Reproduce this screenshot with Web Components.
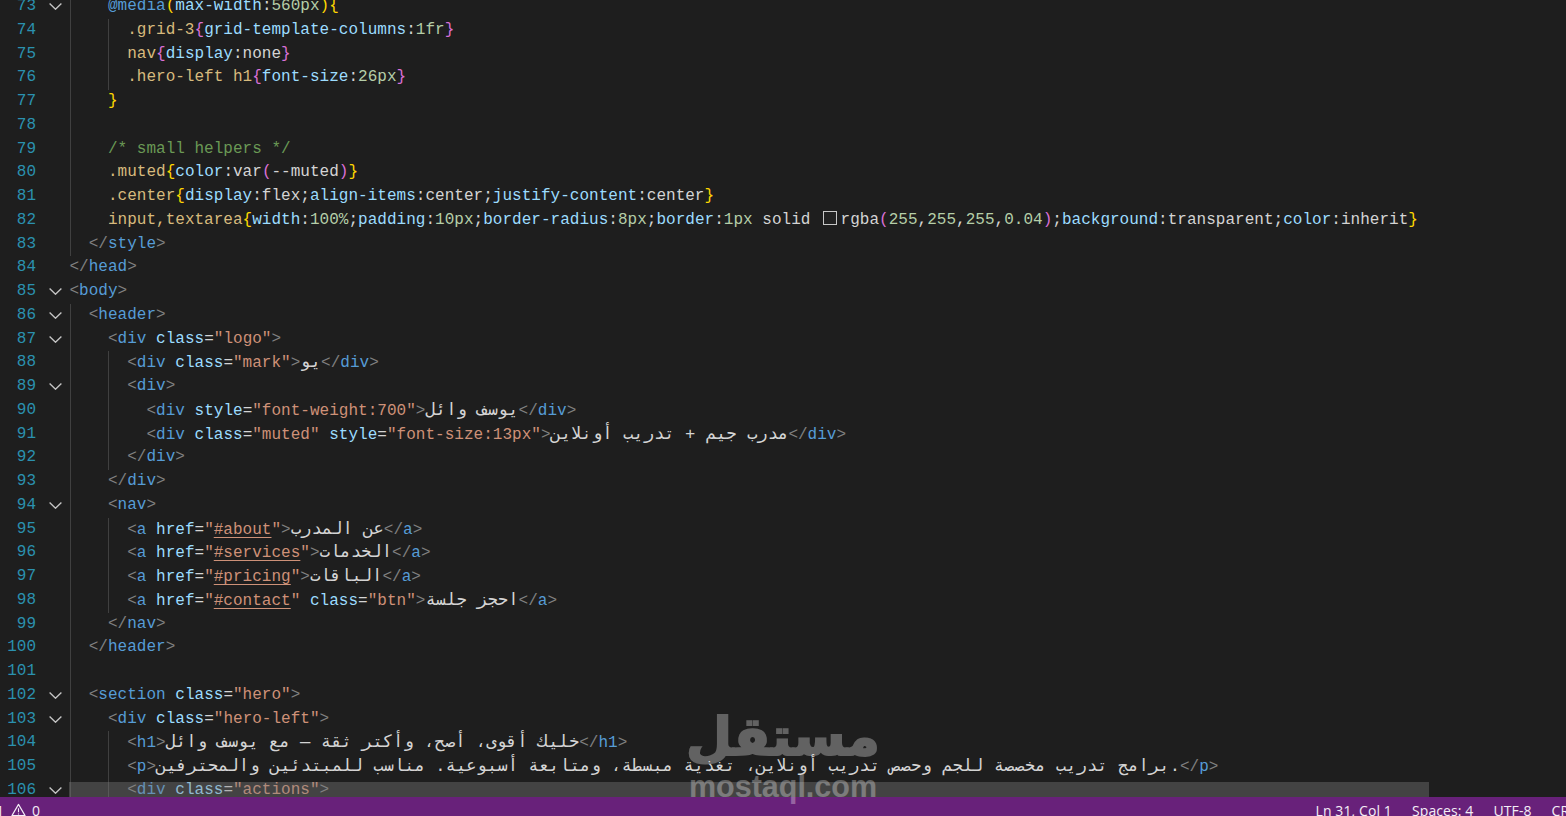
<!DOCTYPE html>
<html lang="en">
<head>
<meta charset="utf-8">
<title>index.html</title>
<style>
html,body{margin:0;height:100%;background:#1e1e1e;overflow:hidden}
</style>
</head>
<body>
<vs-window></vs-window>
<script>
const C={p:'#808080',t:'#569cd6',a:'#9cdcfe',s:'#ce9178',x:'#d4d4d4',e:'#d7ba7d',n:'#b5cea8',c:'#6a9955',g:'#ffd700',m:'#da70d6',b:'#179fff',k:'#569cd6'};

function esc(s){return s.replace(/&/g,'&amp;').replace(/</g,'&lt;').replace(/>/g,'&gt;')}
function span(c,s,extra){return `<span style="color:${C[c]}${extra||''}">${esc(s)}</span>`}

/* HTML line highlighter */
function html(src){
  let out='',re=/(<\/?)([a-z0-9]+)|(\s+[a-z]+)(=)("[^"]*")|(>)|([^<>]+)/g,m;
  while((m=re.exec(src))){
    if(m[1]) out+=span('p',m[1])+span('t',m[2]);
    else if(m[3]){
      out+=span('a',m[3])+span('x',m[4]);
      if(/^"#/.test(m[5])){
        out+=span('s','"')+span('s',m[5].slice(1,-1),';text-decoration:underline;text-underline-offset:3px;text-decoration-thickness:1px')+span('s','"');
      } else out+=span('s',m[5]);
    }
    else if(m[6]) out+=span('p',m[6]);
    else out+=span('x',m[7],';font-size:17.2px;letter-spacing:0');
  }
  return out;
}
/* CSS line: "c|text" tokens split by the broken bar */
function css(src){
  return src.split('¦').map(t=>{
    if(t==='#swatch') return '<i class="swatch"></i>';
    return span(t[0],t.slice(2));
  }).join('');
}

const LINES=[
[73,4,1,[0],css('k|@media¦g|(¦a|max-width¦x|:¦n|560px¦g|)¦g|{')],
[74,6,0,[0,4],css('e|.grid-3¦m|{¦a|grid-template-columns¦x|:¦n|1fr¦m|}')],
[75,6,0,[0,4],css('e|nav¦m|{¦a|display¦x|:none¦m|}')],
[76,6,0,[0,4],css('e|.hero-left h1¦m|{¦a|font-size¦x|:¦n|26px¦m|}')],
[77,4,0,[0],css('g|}')],
[78,0,0,[0],''],
[79,4,0,[0],css('c|/* small helpers */')],
[80,4,0,[0],css('e|.muted¦g|{¦a|color¦x|:var¦m|(¦x|--muted¦m|)¦g|}')],
[81,4,0,[0],css('e|.center¦g|{¦a|display¦x|:flex;¦a|align-items¦x|:center;¦a|justify-content¦x|:center¦g|}')],
[82,4,0,[0],css('e|input,textarea¦g|{¦a|width¦x|:¦n|100%¦x|;¦a|padding¦x|:¦n|10px¦x|;¦a|border-radius¦x|:¦n|8px¦x|;¦a|border¦x|:¦n|1px¦x| solid ¦#swatch¦x|rgba¦m|(¦n|255¦x|,¦n|255¦x|,¦n|255¦x|,¦n|0.04¦m|)¦x|;¦a|background¦x|:transparent;¦a|color¦x|:inherit¦g|}')],
[83,2,0,[0],html('</style>')],
[84,0,0,[],html('</head>')],
[85,0,1,[],html('<body>')],
[86,2,1,[0],html('<header>')],
[87,4,1,[0],html('<div class="logo">')],
[88,6,0,[0,4],html('<div class="mark">يو</div>')],
[89,6,1,[0,4],html('<div>')],
[90,8,0,[0,4],html('<div style="font-weight:700">يوسف وائل</div>')],
[91,8,0,[0,4],html('<div class="muted" style="font-size:13px">مدرب جيم + تدريب أونلاين</div>')],
[92,6,0,[0,4],html('</div>')],
[93,4,0,[0],html('</div>')],
[94,4,1,[0],html('<nav>')],
[95,6,0,[0,4],html('<a href="#about">عن المدرب</a>')],
[96,6,0,[0,4],html('<a href="#services">الخدمات</a>')],
[97,6,0,[0,4],html('<a href="#pricing">الباقات</a>')],
[98,6,0,[0,4],html('<a href="#contact" class="btn">احجز جلسة</a>')],
[99,4,0,[0],html('</nav>')],
[100,2,0,[0],html('</header>')],
[101,0,0,[0],''],
[102,2,1,[0],html('<section class="hero">')],
[103,4,1,[0],html('<div class="hero-left">')],
[104,6,0,[0,4],html('<h1>خليك أقوى، أصح، وأكتر ثقة — مع يوسف وائل</h1>')],
[105,6,0,[0,4],html('<p>برامج تدريب مخصصة للجم وحصص تدريب أونلاين، تغذية مبسطة، ومتابعة أسبوعية. مناسب للمبتدئين والمحترفين.</p>')],
[106,6,1,[0,4],html('<div class="actions">')]
];

class CodeLine extends HTMLElement{
  constructor(){
    super();
    this.attachShadow({mode:'open'}).innerHTML=`<style>
      :host{display:flex;height:23.75px;white-space:pre;font:16px/23.75px "Liberation Mono","DejaVu Sans Mono",monospace}
      .num{flex:0 0 36px;text-align:right;color:#2b91af}
      .fold{flex:0 0 34px;display:flex;align-items:center;padding-left:13px;box-sizing:border-box}
      .fold svg{width:13px;height:7px;display:block}
      .code{flex:1;min-width:0;background-repeat:no-repeat;background-size:1px 100%;text-indent:-.6px;letter-spacing:.02px}
      .swatch{display:inline-block;box-sizing:border-box;width:14px;height:14px;margin:0 4px 0 2.5px;border:1px solid #c8c8c8;background:#222;vertical-align:-1px}
    </style><div class="num"></div><div class="fold"></div><div class="code"></div>`;
  }
  set data([n,ind,fold,guides,markup]){
    const r=this.shadowRoot;
    r.querySelector('.num').textContent=n;
    if(fold) r.querySelector('.fold').innerHTML='<svg viewBox="0 0 13 7" fill="none" stroke="#c5c5c5" stroke-width="1.4"><path d="M.6.6 6.5 6.2 12.4.6"/></svg>';
    const code=r.querySelector('.code');
    if(guides.length){
      code.style.backgroundImage=guides.map(()=>'linear-gradient(#404040,#404040)').join(',');
      code.style.backgroundPosition=guides.map(g=>(g===0?0:38)+'px 0').join(',');
    }
    code.innerHTML=' '.repeat(ind)+markup;
  }
}
customElements.define('code-line',CodeLine);

class CodeView extends HTMLElement{
  constructor(){
    super();
    const r=this.attachShadow({mode:'open'});
    r.innerHTML=`<style>
      :host{display:block;overflow:hidden;position:relative;background:#1e1e1e}
      .scroll{margin-top:-4.9px}
      .line-band{position:absolute;left:69px;width:1360px;top:782px;bottom:0;background:rgba(128,128,128,.38)}
    </style><div class="scroll"></div><div class="line-band"></div>`;
    const s=r.querySelector('.scroll');
    for(const l of LINES){const e=document.createElement('code-line');e.data=l;s.append(e)}
  }
}
customElements.define('code-view',CodeView);

class StatusItem extends HTMLElement{
  constructor(){
    super();
    this.attachShadow({mode:'open'}).innerHTML=`<style>:host{display:inline-flex;align-items:flex-start;white-space:nowrap}</style><slot></slot>`;
  }
}
customElements.define('status-item',StatusItem);

class StatusBar extends HTMLElement{
  constructor(){
    super();
    this.attachShadow({mode:'open'}).innerHTML=`<style>
      :host{display:flex;justify-content:space-between;height:19px;overflow:hidden;background:#68217a;color:#f4edf6;font:14px/19px "Open Sans","Noto Sans",sans-serif}
      .left{display:flex;align-items:flex-start;margin-left:-4px;padding-top:4px}
      .right{display:flex;gap:20px;margin-right:-18px;padding-top:4px;letter-spacing:.1px}
      svg{width:15px;height:14px;margin:2px 6px 0 7px;display:block}
    </style>
    <div class="left"><status-item>1</status-item>
      <svg viewBox="0 0 16 14" fill="none" stroke="#f4edf6" stroke-width="1.2"><path d="M8 1 15 13H1Z" stroke-linejoin="round"/><path d="M8 5v4.5M8 10.6v1.3"/></svg>
      <status-item>0</status-item></div>
    <div class="right"><status-item>Ln 31, Col 1</status-item><status-item>Spaces: 4</status-item><status-item>UTF-8</status-item><status-item>CRLF</status-item></div>`;
  }
}
customElements.define('status-bar',StatusBar);

class MostaqlMark extends HTMLElement{
  constructor(){
    super();
    this.attachShadow({mode:'open'}).innerHTML=`<style>
      :host{position:absolute;left:688px;top:707px;width:190px;display:flex;flex-direction:column;align-items:center;color:#fff;opacity:.3;pointer-events:none}
      .ar{font:700 53px/60px "DejaVu Sans",sans-serif;height:62px;direction:rtl;-webkit-text-stroke:2px #fff;paint-order:stroke fill}
      .en{font:700 30.5px/30px "Liberation Sans",sans-serif;margin-top:2px}
    </style><div class="ar">مستقل</div><div class="en">mostaql.com</div>`;
  }
}
customElements.define('mostaql-mark',MostaqlMark);

class VsWindow extends HTMLElement{
  constructor(){
    super();
    this.attachShadow({mode:'open'}).innerHTML=`<style>
      :host{display:grid;grid-template-rows:797px 19px;width:1566px;height:816px;position:relative;overflow:hidden}
    </style><code-view></code-view><status-bar></status-bar><mostaql-mark></mostaql-mark>`;
  }
}
customElements.define('vs-window',VsWindow);
</script>
</body>
</html>
